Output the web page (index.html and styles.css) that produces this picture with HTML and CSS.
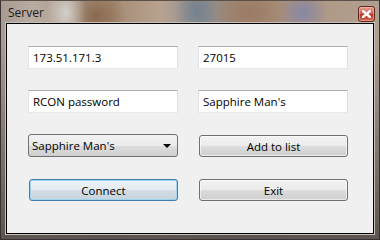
FILE: index.html
```html
<!DOCTYPE html>
<html lang="en">

<head>
  <meta charset="UTF-8">
  <title>Server</title>
  <link rel="stylesheet" href="styles.css">
</head>

<body>
  <div class="window">
    <div class="titlebar">
      <span class="title">Server</span>
      <button class="close-btn">
        <svg width="9" height="8" viewBox="0 0 9 8">
          <path d="M1 1 L8 7 M8 1 L1 7" stroke="#fff" stroke-width="2.4" stroke-linecap="square" />
        </svg>
      </button>
    </div>
    <div class="client">
      <div class="grid">
        <input class="textbox" type="text" value="173.51.171.3">
        <input class="textbox" type="text" value="27015">
        <input class="textbox" type="text" value="RCON password">
        <input class="textbox" type="text" value="Sapphire Man's">
        <div class="combo">
          <span>Sapphire Man's</span>
          <span class="arrow"></span>
        </div>
        <button class="btn">Add to list</button>
        <button class="btn default">Connect</button>
        <button class="btn">Exit</button>
      </div>
    </div>
  </div>
</body>

</html>
```
FILE: styles.css
```css
body {
  margin: 0;
  font-family: "Open Sans", "Noto Sans", sans-serif;
  font-size: 11.5px;
}

.window {
  width: 380px;
  height: 240px;
  box-sizing: border-box;
  display: flex;
  flex-direction: column;
  padding: 0 5px 5px 5px;
  border: 1px solid #3a3230;
  border-top-color: #5a5048;
  background:
    radial-gradient(ellipse 20px 30px at 65px 12px, rgba(215, 212, 208, 0.9), transparent),
    radial-gradient(ellipse 30px 30px at 95px 15px, rgba(130, 95, 65, 0.8), transparent),
    radial-gradient(ellipse 22px 30px at 195px 10px, rgba(110, 125, 140, 0.8), transparent),
    radial-gradient(ellipse 40px 30px at 250px 12px, rgba(150, 115, 90, 0.7), transparent),
    radial-gradient(ellipse 25px 25px at 302px 12px, rgba(125, 130, 170, 0.8), transparent),
    linear-gradient(to bottom, transparent 0, transparent 40px, #5c5450 100%),
    linear-gradient(to right, #a89a90 0, #b8aca2 30px, #a48a74 110px, #b8a290 160px, #8e8e92 200px, #a48a76 240px, #b09a88 330px, #b0a090 380px);
}

.titlebar {
  height: 22px;
  display: flex;
  align-items: center;
  justify-content: space-between;
  flex-shrink: 0;
}

.title {
  color: #1c1c1c;
  font-size: 12px;
  padding-left: 2px;
  padding-top: 1px;
}

.close-btn {
  width: 17px;
  height: 16px;
  margin-top: 4px;
  margin-right: -1px;
  padding: 0;
  border: 1px solid #5a2a22;
  border-radius: 3px;
  background: linear-gradient(to bottom, #e8a090 0, #d06050 45%, #b8382a 55%, #d86a50 100%);
  display: flex;
  align-items: center;
  justify-content: center;
  box-shadow: inset 0 0 0 1px rgba(255, 200, 190, 0.5);
}

.client {
  flex: 1;
  background: #f0f0f0;
  border: 1px solid #000;
  box-shadow: 0 0 0 1px #c8c0b8;
  padding: 22px 0 0 21px;
}

.grid {
  display: grid;
  grid-template-columns: 150px 150px;
  grid-auto-rows: 23px;
  column-gap: 20px;
  row-gap: 21px;
}

.textbox {
  font-family: inherit;
  font-size: inherit;
  color: #000;
  height: 23px;
  box-sizing: border-box;
  padding: 0 4px;
  margin: 0;
  background: #fff;
  border: 1px solid #e3e9ef;
  border-top-color: #abadb3;
  border-left-color: #e2e3ea;
  border-right-color: #dbdfe6;
  outline: none;
}

.combo {
  height: 23px;
  box-sizing: border-box;
  border: 1px solid #707070;
  border-radius: 3px;
  display: flex;
  align-items: center;
  justify-content: space-between;
  padding: 0 6px 0 3px;
  background: linear-gradient(to bottom, #f2f2f2 0, #ebebeb 50%, #dddddd 50%, #cfcfcf 100%);
  color: #000;
}

.arrow {
  width: 0;
  height: 0;
  border-left: 4px solid transparent;
  border-right: 4px solid transparent;
  border-top: 4px solid #000;
}

.btn {
  font-family: inherit;
  font-size: inherit;
  color: #000;
  height: 22px;
  margin: 1px 0 0 1px;
  padding: 0;
  border: 1px solid #707070;
  border-radius: 3px;
  background: linear-gradient(to bottom, #f2f2f2 0, #ebebeb 50%, #dddddd 50%, #cfcfcf 100%);
  box-shadow: inset 0 0 0 1px rgba(255, 255, 255, 0.6);
}

.btn.default {
  border-color: #3c7fb1;
  background: linear-gradient(to bottom, #eef4f8 0, #e3ebf0 50%, #d3dee6 50%, #c6d3dc 100%);
  box-shadow: inset 0 0 0 1px #9fd4ec;
}
```
